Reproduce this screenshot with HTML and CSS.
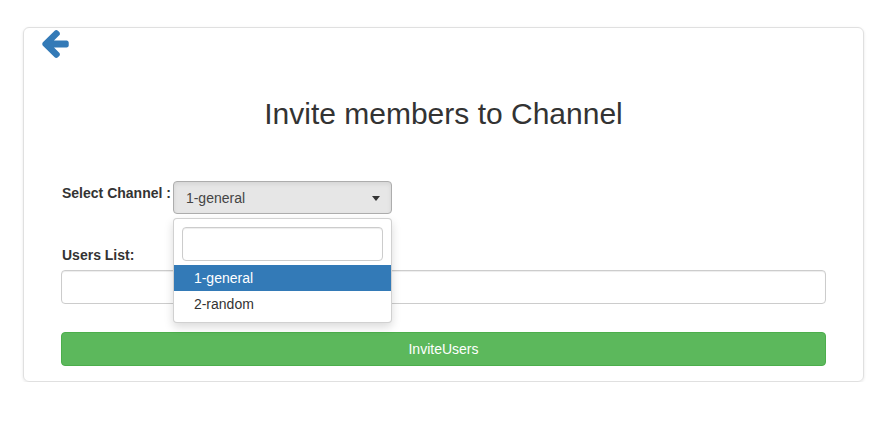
FILE: index.html
```html
<!DOCTYPE html>
<html>
<head>
<meta charset="utf-8">
<link rel="stylesheet" href="styles.css">
</head>
<body>
<div class="card">
  <div class="back">
    <svg class="back-icon" viewBox="192 182 1472 1557" width="27" height="28" aria-hidden="true">
      <path fill="#337ab7" d="M1664 896v128q0 53-32.5 90.5T1547 1152H843l293 294q38 36 38 90t-38 90l-75 76q-37 37-90 37-52 0-91-37L229 1051q-37-37-37-90 0-52 37-91l651-650q38-38 91-38 52 0 90 38l75 74q38 38 38 91t-38 91L843 768h704q52 0 84.5 37.5T1664 896z"/>
    </svg>
  </div>
  <h2 class="title">Invite members to Channel</h2>
  <div class="form">
    <div class="row">
      <label class="label inline">Select Channel :</label>
      <div class="select">
        <div class="select-btn">
          <span class="select-text">1-general</span>
          <span class="caret"></span>
        </div>
        <div class="menu">
          <div class="searchbox"><input class="search" type="text"></div>
          <ul class="options">
            <li class="option active">1-general</li>
            <li class="option">2-random</li>
          </ul>
        </div>
      </div>
    </div>
    <div class="group">
      <label class="label">Users List:</label>
      <input class="input" type="text">
    </div>
    <button class="btn-invite">InviteUsers</button>
  </div>
</div>
</body>
</html>
```
FILE: styles.css
```css
* { box-sizing: border-box; }
html, body { margin: 0; padding: 0; background: #fff; }
body {
  font-family: "Liberation Sans", Arial, Helvetica, sans-serif;
  font-size: 14px;
  line-height: 20px;
  color: #333;
}
.card {
  margin: 27px 17px 0 23px;
  width: 841px;
  border: 1px solid #e0e0e0;
  border-radius: 6px;
  box-shadow: 0 1px 3px rgba(0,0,0,0.1);
  padding: 0 37px 15px 37px;
}
.back {
  margin: 2px 0 0 -19px;
  height: 28px;
}
.back-icon { display: block; }
.title {
  margin: 39px 0 0 0;
  font-size: 30px;
  line-height: 33px;
  font-weight: 400;
  text-align: center;
  color: #333;
}
.form { margin-top: 51px; }
.row {
  display: flex;
  align-items: flex-start;
}
.label {
  display: block;
  font-weight: 700;
  font-size: 14px;
  line-height: 20px;
  margin: 0 0 5px 1px;
}
.label.inline {
  margin: 2px 2px 0 1px;
}
.select {
  position: relative;
  width: 219px;
}
.select-btn {
  height: 33px;
  border: 1px solid #adadad;
  border-radius: 4px;
  background: #e6e6e6;
  box-shadow: inset 0 2px 4px rgba(0,0,0,0.08);
  display: flex;
  align-items: center;
  justify-content: space-between;
  padding: 1px 11px 0 12px;
  color: #444;
}
.caret {
  width: 0;
  height: 0;
  border-top: 5px solid #333;
  border-left: 4.5px solid transparent;
  border-right: 4.5px solid transparent;
  margin-top: 1px;
}
.menu {
  position: absolute;
  top: 37px;
  left: 0;
  width: 219px;
  background: #fff;
  border: 1px solid rgba(0,0,0,0.18);
  border-radius: 4px;
  box-shadow: 0 4px 10px rgba(0,0,0,0.15);
  padding: 8px 0 5px 0;
  z-index: 10;
}
.searchbox { padding: 0 8px; }
.search {
  display: block;
  width: 100%;
  height: 34px;
  border: 1px solid #ccc;
  border-radius: 4px;
  box-shadow: inset 0 1px 1px rgba(0,0,0,0.075);
  font: inherit;
  outline: none;
}
.options {
  list-style: none;
  margin: 4px 0 0 0;
  padding: 0;
}
.option {
  padding: 3px 20px;
  line-height: 20px;
  color: #333;
}
.option.active {
  background: #337ab7;
  color: #fff;
}
.group { margin-top: 31px; }
.input {
  display: block;
  width: 100%;
  height: 34px;
  border: 1px solid #ccc;
  border-radius: 4px;
  box-shadow: inset 0 1px 1px rgba(0,0,0,0.075);
  font: inherit;
  outline: none;
}
.btn-invite {
  display: block;
  width: 100%;
  height: 34px;
  margin-top: 28px;
  background: #5cb85c;
  border: 1px solid #4cae4c;
  border-radius: 4px;
  color: #fff;
  font: inherit;
  font-size: 14px;
  text-align: center;
  padding: 0;
}
```
